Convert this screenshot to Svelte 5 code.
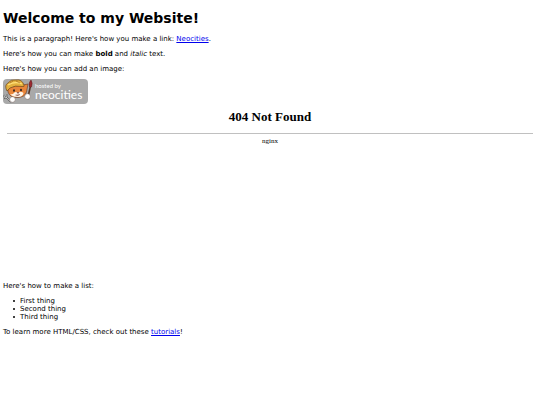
<script>
  const things = ['First thing', 'Second thing', 'Third thing'];
</script>

<main>
  <h1>Welcome to my Website!</h1>
  <p>This is a paragraph! Here's how you make a link: <a href="#neocities">Neocities</a>.</p>
  <p>Here's how you can make <strong>bold</strong> and <em>italic</em> text.</p>
  <p class="caption">Here's how you can add an image:</p>

  <div class="badge">
    <svg class="cat" viewBox="0 0 30 25" aria-hidden="true">
      <path d="M5 8 L5 13 Q7 19 15 18.5 Q22 18 23.5 13 L25 5 L20 6 Z" fill="#e8853a" stroke="#60392a" stroke-width=".6" />
      <path d="M10 15 Q12 12 14.5 13.5 Q18 12 20.5 14 Q20 18 15 18 Q10 18 7 15.5 Z" fill="#fff4e7" />
      <path d="M4 12 Q1 6 5 4 Q8 0 13 1 Q19 0 21 6 Q22 8 19 7.5 Q12 6 7 9 Z" fill="#e3b13e" stroke="#70471d" stroke-width=".7" />
      <path d="M5 6 Q12 2 19 5" fill="none" stroke="#ffe17a" stroke-width="1.2" />
      <path d="M7 4 L10 2 M13 2 L17 4" fill="none" stroke="#98601e" stroke-width=".6" />
      <ellipse cx="11" cy="11.5" rx="1" ry="1.3" fill="#342520" />
      <ellipse cx="18" cy="11" rx="1" ry="1.3" fill="#342520" />
      <path d="M14 13.5 L16 13.5 L15 14.5 Z M12.5 16 Q15 17 17 15.5" fill="#8b3e34" stroke="#6a3027" stroke-width=".5" />
      <path d="M1 16 L2 19 L4 18 L4 15 M3 18 L8 23" fill="none" stroke="#555" stroke-width="1.7" />
      <path d="M1 16 L2 19 L4 18 L4 15 M3 18 L8 23" fill="none" stroke="#e0e0e0" stroke-width=".7" />
      <path d="M27.5 7 L24.5 20" stroke="#59382a" stroke-width="1.6" />
      <path d="M28 1 Q25 4 26.5 8 L28.5 8 Q30 4 28 1 Z" fill="#9d2930" stroke="#5d2524" stroke-width=".5" />
      <circle cx="9.5" cy="20.5" r="2.8" fill="#fff" stroke="#7b6660" stroke-width=".5" />
      <circle cx="24.5" cy="17.5" r="2.8" fill="#fff" stroke="#7b6660" stroke-width=".5" />
    </svg>
    <div class="brand"><span>hosted by</span><b>neocities</b></div>
  </div>

  <section class="frame">
    <h2>404 Not Found</h2>
    <hr />
    <div>nginx</div>
  </section>

  <p>Here's how to make a list:</p>
  <ul>
    {#each things as thing}
      <li>{thing}</li>
    {/each}
  </ul>
  <p>To learn more HTML/CSS, check out these <a href="#tutorials">tutorials</a>!</p>
</main>

<style>
  :global(body) {
    margin: 0;
    background: #fff;
  }
  main {
    padding: 10px 3px;
    color: #000;
    font: 7px/8px Verdana, "DejaVu Sans", sans-serif;
  }
  h1 {
    margin: 0 0 8px;
    font-size: 14px;
    line-height: 17px;
  }
  p {
    margin: 0 0 7px;
  }
  .caption {
    margin-bottom: 6px;
  }
  a {
    color: #0000ee;
    text-decoration: underline;
  }
  .badge {
    display: flex;
    width: 85px;
    height: 25px;
    border-radius: 4px;
    background: #a9a9a9;
    color: #fff;
  }
  .cat {
    flex: none;
    width: 30px;
    height: 25px;
  }
  .brand {
    display: flex;
    flex-direction: column;
    padding: 3px 0 0 2px;
    font-family: Lato, sans-serif;
  }
  .brand span {
    font-size: 6px;
    line-height: 7px;
  }
  .brand b {
    font-size: 12px;
    font-weight: 400;
    line-height: 12px;
  }
  .frame {
    box-sizing: border-box;
    height: 178px;
    padding: 5px 4px;
    font: 7px/8px "Liberation Serif", serif;
    text-align: center;
  }
  h2 {
    margin: 0;
    font-size: 13px;
    line-height: 15px;
  }
  hr {
    height: 1px;
    margin: 9px 0 3px;
    border: 0;
    background: #c0c0c0;
  }
  ul {
    margin: 0 0 7px;
    padding-left: 10px;
    list-style: none;
  }
  li {
    display: flex;
    align-items: center;
    gap: 5px;
  }
  li::before {
    width: 2px;
    height: 2px;
    border-radius: 1px;
    background: #000;
    content: "";
  }
</style>
